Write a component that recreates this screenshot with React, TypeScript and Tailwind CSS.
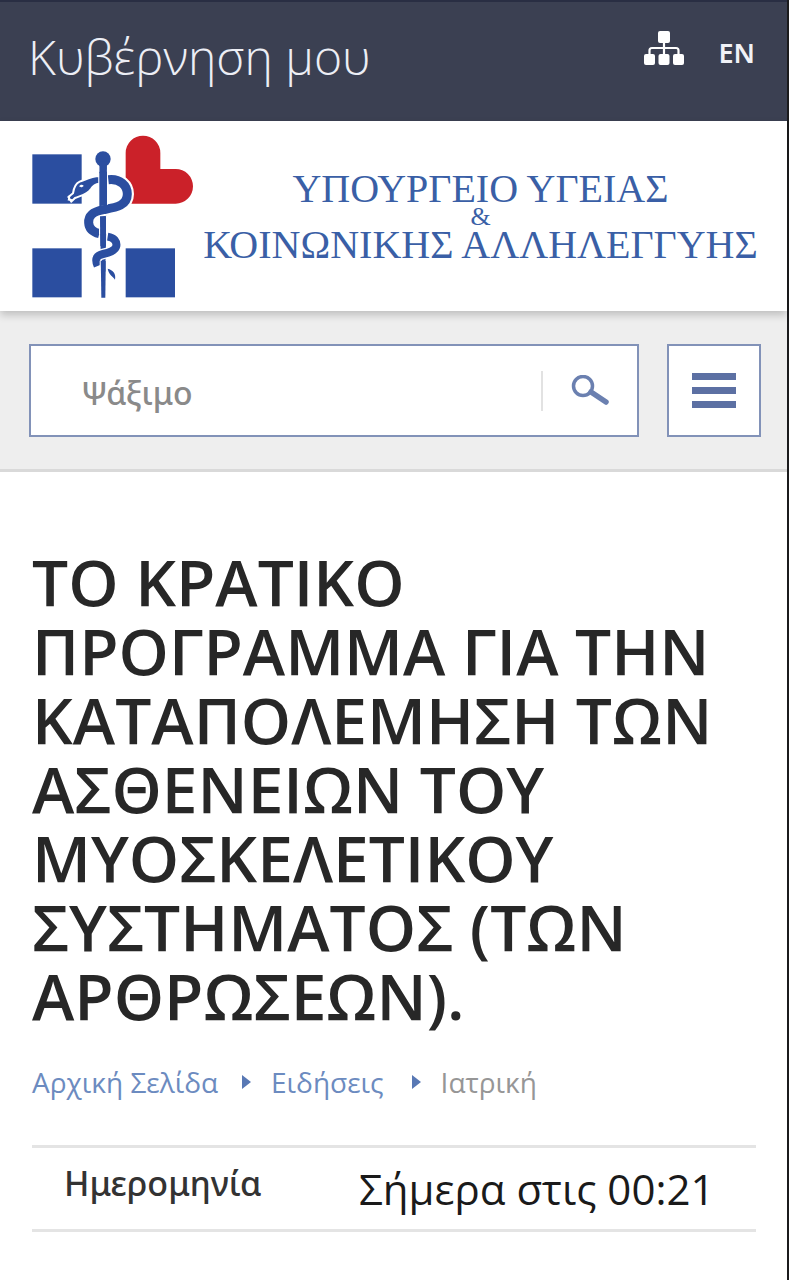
import React from "react";

function SitemapIcon() {
  return (
    <svg width="40" height="34" viewBox="0 0 40 34" aria-hidden="true">
      <g fill="#ffffff">
        <rect x="14" y="0" width="12" height="12" rx="2" />
        <rect x="0" y="23" width="11" height="11" rx="2" />
        <rect x="14.5" y="23" width="11" height="11" rx="2" />
        <rect x="29" y="23" width="11" height="11" rx="2" />
      </g>
      <path
        d="M20 10V24M5.5 24V19.500Q5.500 17 8 17H32Q34.500 17 34.500 19.500V24"
        fill="none"
        stroke="#ffffff"
        strokeWidth="2.200"
      />
    </svg>
  );
}

function MinistryEmblem() {
  return (
    <svg
      className="shrink-0"
      width="162"
      height="164"
      viewBox="35 30 486 492"
      role="img"
      aria-label="Υπουργείο Υγείας"
    >
      <g fill="#2b4ea0">
        <rect x="36" y="88" width="148" height="148" />
        <rect x="36" y="370" width="148" height="147" />
        <rect x="316" y="370" width="148" height="147" />
      </g>
      <path
        d="M316 236V84A52 52 0 0 1 420 84V132H466A52 52 0 0 1 466 236Z"
        fill="#cb2129"
      />
      <g fill="#2b4ea0">
        <circle cx="248" cy="102" r="23" />
        <path d="M237 110H260L255 518H243Z" />
      </g>
      <g fill="none" strokeLinecap="butt">
        <path
          d="M266 163C300 160 322 182 322 207C322 242 288 247 250 254C216 260 204 272 205 293C206 311 218 321 237 326"
          stroke="#ffffff"
          strokeWidth="38"
        />
        <path
          d="M264 164C300 160 321 182 321 207C321 242 288 247 250 254C216 260 204 272 205 293C206 311 218 321 237 326"
          stroke="#2b4ea0"
          strokeWidth="27"
        />
        <path
          d="M263 335C282 338 290 350 288 363C285 378 265 383 248 387C230 391 222 400 232 423"
          stroke="#ffffff"
          strokeWidth="33"
        />
        <path
          d="M262 335C282 338 290 350 288 363C285 378 265 383 248 387C230 391 222 400 232 423"
          stroke="#2b4ea0"
          strokeWidth="24"
        />
      </g>
      <path
        d="M237 153C213 153 193 165 178 170C163 177 160 190 158 205L144 216L153 230L164 219C184 211 201 209 212 192C219 180 225 177 237 176Z"
        fill="#2b4ea0"
        stroke="#ffffff"
        strokeWidth="6"
        strokeLinejoin="round"
      />
      <path d="M148 212L145 224L157 225" fill="none" stroke="#ffffff" strokeWidth="5" />
      <path d="M176 184C180 178 186 178 190 182C187 187 181 188 176 184Z" fill="#ffffff" />
      <path d="M237 145V242M260 145V240M238 272V327M258 272V326M240 407V432M258 402V440" stroke="#ffffff" strokeWidth="4" />
      <path d="M237 140H260V240L237 244ZM239 274H257V360L240 364ZM241 408H256V440H242Z" fill="#2b4ea0" />
      <path d="M262 431C278 435 288 446 284 464C278 454 266 450 262 431Z" fill="#2b4ea0" />
    </svg>
  );
}

function SearchIcon() {
  return (
    <svg width="40" height="32" viewBox="0 0 40 32" fill="none" aria-hidden="true">
      <circle cx="12" cy="11" r="9.500" stroke="#6b80b0" strokeWidth="3.500" />
      <path d="M20 17L35 27" stroke="#6b80b0" strokeWidth="5.500" strokeLinecap="round" />
    </svg>
  );
}

function BreadcrumbArrow() {
  return (
    <svg width="9" height="14" viewBox="0 0 9 14" aria-hidden="true">
      <path d="M0 0L9 7L0 14Z" fill="#5878b4" />
    </svg>
  );
}

export default function App() {
  return (
    <div className="min-h-screen border-r-2 border-[#1b1b1d] bg-white font-['Open_Sans','Noto_Sans',sans-serif]">
      <header className="flex h-[121px] items-start justify-between border-t-2 border-[#292e43] bg-[#3b4052] pr-8 pl-7">
        <a href="#" className="pt-6 text-[48px] leading-[62px] font-light text-[#eceef5]">
          Κυβέρνηση μου
        </a>
        <div className="flex items-start gap-[35px] pt-[29px]">
          <a href="#" aria-label="Χάρτης ιστότοπου">
            <SitemapIcon />
          </a>
          <a href="#" className="font-['Noto_Sans',sans-serif] text-[27px] leading-[44px] font-semibold text-[#f1f2f7]">
            EN
          </a>
        </div>
      </header>

      <div className="relative flex h-[190px] items-start bg-white pt-[14px] pr-7 pl-8 shadow-[0_4px_8px_rgba(0,0,0,0.2)]">
        <MinistryEmblem />
        <div className="ml-2 flex flex-1 flex-col items-center pt-[38px] font-['Liberation_Serif',serif] whitespace-nowrap text-[#3a5fa6]">
          <span className="text-[40px] leading-8">ΥΠΟΥΡΓΕΙΟ ΥΓΕΙΑΣ</span>
          <span className="text-[26px] leading-6">&amp;</span>
          <span className="text-[40px] leading-8">ΚΟΙΝΩΝΙΚΗΣ ΑΛΛΗΛΕΓΓΥΗΣ</span>
        </div>
      </div>

      <div className="flex gap-7 border-b-3 border-[#d9d9d9] bg-[#eeeeee] pt-[33px] pr-[26px] pb-8 pl-[29px]">
        <form className="flex h-[93px] min-w-0 flex-1 items-center border-2 border-[#8292b8] bg-white">
          <input
            type="search"
            aria-label="Ψάξιμο"
            placeholder="Ψάξιμο"
            className="min-w-0 flex-1 bg-transparent pt-1 pl-[50px] font-['Noto_Sans',sans-serif] text-[32px] font-medium text-[#555555] outline-none placeholder:text-[#8a8a8a]"
          />
          <button
            type="button"
            aria-label="Αναζήτηση"
            className="flex h-10 w-24 items-center border-l-2 border-[#e2e2e2] pl-7"
          >
            <SearchIcon />
          </button>
        </form>
        <button
          type="button"
          aria-label="Μενού"
          className="flex h-[93px] w-[94px] flex-col items-center justify-center gap-[7px] border-2 border-[#8292b8] bg-white"
        >
          <span className="h-[7px] w-11 bg-[#5c70a3]" />
          <span className="h-[7px] w-11 bg-[#5c70a3]" />
          <span className="h-[7px] w-11 bg-[#5c70a3]" />
        </button>
      </div>

      <main className="pt-[75px] pr-[31px] pl-8">
        <h1 className="text-[64px] leading-[69px] font-semibold text-[#272727]">
          ΤΟ ΚΡΑΤΙΚΟ ΠΡΟΓΡΑΜΜΑ ΓΙΑ ΤΗΝ ΚΑΤΑΠΟΛΕΜΗΣΗ ΤΩΝ ΑΣΘΕΝΕΙΩΝ ΤΟΥ ΜΥΟΣΚΕΛΕΤΙΚΟΥ ΣΥΣΤΗΜΑΤΟΣ (ΤΩΝ ΑΡΘΡΩΣΕΩΝ).
        </h1>
        <nav aria-label="Διαδρομή" className="mt-[34px] flex items-center text-[28px] leading-9 text-[#6c8bc0]">
          <a href="#">Αρχική Σελίδα</a>
          <span className="mr-5 ml-6">
            <BreadcrumbArrow />
          </span>
          <a href="#">Ειδήσεις</a>
          <span className="mr-5 ml-7">
            <BreadcrumbArrow />
          </span>
          <span className="text-[#969696]">Ιατρική</span>
        </nav>
        <dl className="mt-[45px] flex h-[87px] items-center border-y-3 border-[#e4e4e4] pl-8">
          <dt className="w-[295px] pb-3 font-['Noto_Sans',sans-serif] text-[34px] leading-10 font-medium text-[#333333]">
            Ημερομηνία
          </dt>
          <dd className="text-[42px] leading-[60px] whitespace-nowrap text-[#1a1a1a]">Σήμερα στις 00:21</dd>
        </dl>
      </main>
    </div>
  );
}
